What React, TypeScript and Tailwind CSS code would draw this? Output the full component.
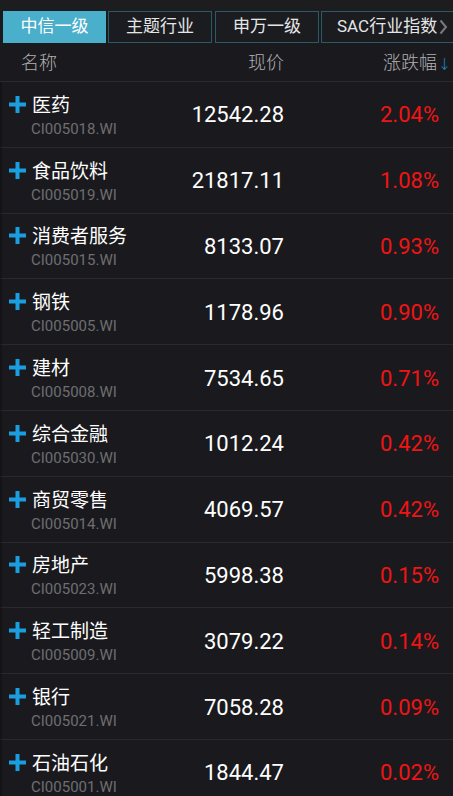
import React from "react";

const rows = [
  { name: "医药", code: "CI005018.WI", price: "12542.28", pct: "2.04%" },
  { name: "食品饮料", code: "CI005019.WI", price: "21817.11", pct: "1.08%" },
  { name: "消费者服务", code: "CI005015.WI", price: "8133.07", pct: "0.93%" },
  { name: "钢铁", code: "CI005005.WI", price: "1178.96", pct: "0.90%" },
  { name: "建材", code: "CI005008.WI", price: "7534.65", pct: "0.71%" },
  { name: "综合金融", code: "CI005030.WI", price: "1012.24", pct: "0.42%" },
  { name: "商贸零售", code: "CI005014.WI", price: "4069.57", pct: "0.42%" },
  { name: "房地产", code: "CI005023.WI", price: "5998.38", pct: "0.15%" },
  { name: "轻工制造", code: "CI005009.WI", price: "3079.22", pct: "0.14%" },
  { name: "银行", code: "CI005021.WI", price: "7058.28", pct: "0.09%" },
  { name: "石油石化", code: "CI005001.WI", price: "1844.47", pct: "0.02%" },
];

const font = "font-['Roboto','Noto_Sans_CJK_SC',sans-serif]";

function Plus() {
  return (
    <svg width="17" height="17" viewBox="0 0 17 17" className="shrink-0">
      <rect x="0" y="6.5" width="17" height="4" fill="#1b9ee0" />
      <rect x="6.5" y="0" width="4" height="17" fill="#1b9ee0" />
    </svg>
  );
}

export default function App() {
  return (
    <div className={`w-[453px] h-[796px] overflow-hidden bg-[#1a1a1e] ${font}`}>
      <div className="h-[11px] bg-[#1d1d20]" />
      <div className="flex h-[32px] pl-[3px] gap-[2px]">
        <div className="w-[103px] shrink-0 bg-[#4aafcb] text-white text-[17px] flex items-center justify-center">
          中信一级
        </div>
        <div className="w-[104px] shrink-0 border border-[#2c5966] bg-[#1a1c20] text-[#e6e6e6] text-[17px] flex items-center justify-center">
          主题行业
        </div>
        <div className="w-[104px] shrink-0 ml-[1px] border border-[#2c5966] bg-[#1a1c20] text-[#e6e6e6] text-[17px] flex items-center justify-center">
          申万一级
        </div>
        <div className="w-[140px] shrink-0 border border-[#2c5966] bg-[#1a1c20] text-[#e6e6e6] text-[17px] flex items-center pl-[15px]">
          SAC行业指数
          <svg width="9" height="16" viewBox="0 0 9 16" className="ml-[2px]">
            <path d="M1.5 1.5 L7 8 L1.5 14.5" fill="none" stroke="#7a7a7e" strokeWidth="2" />
          </svg>
        </div>
      </div>
      <div className="flex h-[39px] items-center border-b border-[#2a2a2e] text-[#b0b0b2] text-[18px] font-light">
        <div className="w-[284px] pl-[21px] flex justify-between">
          <span>名称</span>
          <span>现价</span>
        </div>
        <div className="flex-1 flex justify-end items-center pr-[2px]">
          <span>涨跌幅</span>
          <span className="text-[#1b9ee0] text-[13px] ml-[1px] mt-[4px]">↓</span>
        </div>
      </div>
      {rows.map((r) => (
        <div
          key={r.code}
          className="flex h-[65.8px] items-center border-b border-[#2a2a2e] border-l-2 border-l-[#141416]"
        >
          <div className="w-[282px] flex items-center justify-between">
            <div className="flex flex-col pl-[7px] mt-[3px]">
              <div className="flex items-center gap-[6px] text-white text-[19px] leading-[26px]">
                <div className="-mt-[3px]"><Plus /></div>
                <span>{r.name}</span>
              </div>
              <div className="pl-[22px] text-[#6e6e72] text-[15px] leading-[20px]">
                {r.code}
              </div>
            </div>
            <div className="text-white text-[22px] mt-[1px]">{r.price}</div>
          </div>
          <div className="flex-1 flex justify-end pr-[14px] text-[#f01414] text-[22px] mt-[1px]">
            {r.pct}
          </div>
        </div>
      ))}
    </div>
  );
}
